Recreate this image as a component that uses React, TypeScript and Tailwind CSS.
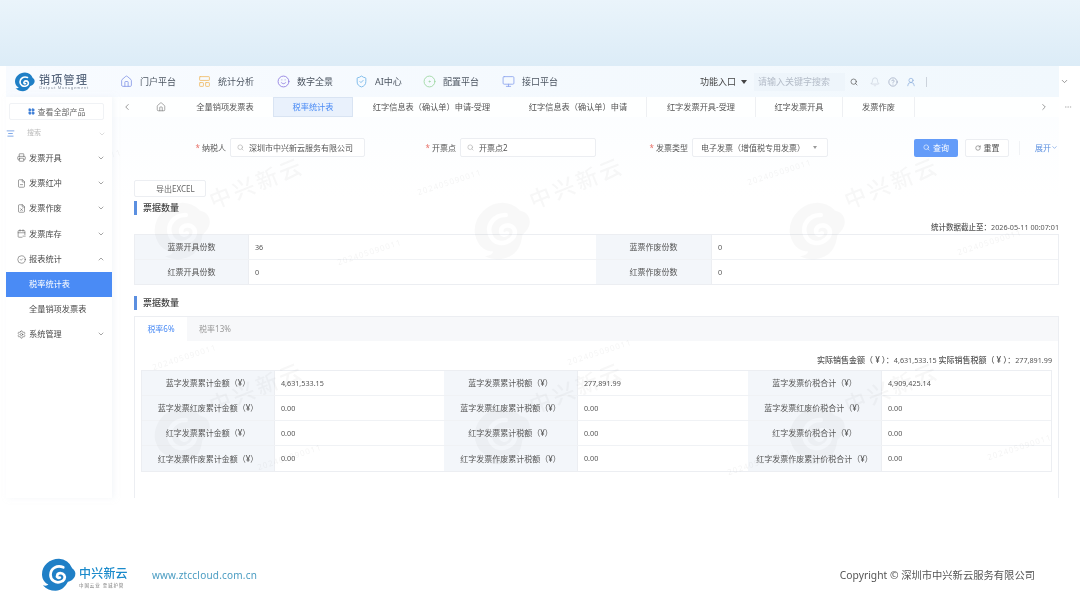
import {
  House, LayoutPanelTop, Smile, ShieldCheck, CircleDot, Monitor, ChevronDown, ChevronUp, ChevronLeft, ChevronRight,
  Search, Bell, CircleHelp, UserRound, LayoutGrid, Printer, FileMinus, FileX, CalendarMinus, CircleCheck, Settings, RotateCw, AlignCenter, Ellipsis,
} from "lucide-react";

const font = { fontFamily: '"Noto Sans","Noto Sans CJK SC","Liberation Sans",sans-serif' };

function Logo({ size, color = "#1f7fc6" }: { size: number; color?: string }) {
  return (
    <svg width={size} height={size} viewBox="0 0 40 40" fill="none">
      <path d="M20 1a17 17 0 0 1 15.500 11c3 2 4.500 5 3.500 8.500-1 4-5 6.500-8.500 7.500-3 6-8 10.500-14.500 10.500-6 0-11-2-15-6.500 3 1 5.500 0.500 6.500-1C2.500 29 0 24 0 19 0 9 9 1 20 1Z" fill={color} />
      <path d="M25 11c-7-3-15 1-15 9 0 6 6 10 12 8 4-1 6-5 4-8-2-3-7-3-8 0-1 2 1 4 3 3" stroke="#fff" strokeWidth="3.2" strokeLinecap="round" />
    </svg>
  );
}

function Stat({ label, value, labelW, valueW }: { label: string; value: string; labelW: string; valueW: string }) {
  return (
    <>
      <div className={`${labelW} h-full bg-[#f3f6fa] flex items-center justify-center border-r border-[#eceef2] shrink-0 text-[8px]`}>{label}</div>
      <div className={`${valueW} h-full flex items-center pl-[6px] shrink-0 text-[7.2px]`}>{value}</div>
    </>
  );
}

function Title() {
  return (
    <div className="h-[14px] flex items-center border-l-[3px] border-[#5b8fe0] pl-[6px] text-[9px] font-medium text-[#444]">票据数量</div>
  );
}

const sideTop = [
  { t: "发票开具", I: Printer },
  { t: "发票红冲", I: FileMinus },
  { t: "发票作废", I: FileX },
  { t: "发票库存", I: CalendarMinus },
];

const nav = [
  { t: "门户平台", I: House, c: "text-[#8a9be8]", w: "w-[78px]" },
  { t: "统计分析", I: LayoutPanelTop, c: "text-[#f0bd6a]", w: "w-[79px]" },
  { t: "数字全景", I: Smile, c: "text-[#8e7be0]", w: "w-[78px]" },
  { t: "AI中心", I: ShieldCheck, c: "text-[#72b5e8]", w: "w-[68px]" },
  { t: "配置平台", I: CircleDot, c: "text-[#9bd6a0]", w: "w-[79px]" },
  { t: "接口平台", I: Monitor, c: "text-[#8ea6ee]", w: "w-[79px]" },
];

const tabs = [
  { t: "红字信息表（确认单）申请-受理", w: "w-[157px]" },
  { t: "红字信息表（确认单）申请", w: "w-[137px] border-r border-[#eef0f3]" },
  { t: "红字发票开具-受理", w: "w-[108px]" },
  { t: "红字发票开具", w: "w-[88px] border-x border-[#eef0f3]" },
  { t: "发票作废", w: "w-[72px] border-r border-[#eef0f3]" },
];

const rows = [
  ["蓝字发票累计金额（¥）", "4,631,533.15", "蓝字发票累计税额（¥）", "277,891.99", "蓝字发票价税合计（¥）", "4,909,425.14"],
  ["蓝字发票红废累计金额（¥）", "0.00", "蓝字发票红废累计税额（¥）", "0.00", "蓝字发票红废价税合计（¥）", "0.00"],
  ["红字发票累计金额（¥）", "0.00", "红字发票累计税额（¥）", "0.00", "红字发票价税合计（¥）", "0.00"],
  ["红字发票作废累计金额（¥）", "0.00", "红字发票作废累计税额（¥）", "0.00", "红字发票作废累计价税合计（¥）", "0.00"],
];

const marks = [
  "left-[145px] top-[115px]",
  "left-[465px] top-[115px]",
  "left-[780px] top-[115px]",
  "left-[145px] top-[320px]",
  "left-[465px] top-[320px]",
  "left-[780px] top-[320px]",
];

const smallMarks = [
  "left-[10px] top-[320px]", "left-[5px] top-[405px]", "left-[145px] top-[285px]", "left-[410px] top-[110px]",
  "left-[50px] top-[90px]", "left-[740px] top-[100px]", "left-[250px] top-[385px]", "left-[560px] top-[280px]",
  "left-[720px] top-[390px]", "left-[950px] top-[170px]", "left-[980px] top-[375px]", "left-[330px] top-[180px]",
];

export default function App() {
  return (
    <div className="relative w-[1080px] h-[607px] overflow-hidden bg-white flex flex-col text-[8px] text-[#555] blur-[0.35px]" style={font}>
      <div className="h-[66px] shrink-0 bg-gradient-to-b from-[#eaf4fb] to-[#dcecf7]" />

      <div className="relative h-[432px] shrink-0 ml-[6px] w-[1053px] flex flex-col bg-white">
        {/* header */}
        <div className="h-[31px] shrink-0 flex items-center bg-gradient-to-r from-[#f8fbff] to-[#f1f8fd]">
          <div className="ml-[9px] shrink-0"><Logo size={20} /></div>
          <div className="ml-[4px] w-[81px] shrink-0 flex flex-col leading-none">
            <span className="text-[11px] font-medium tracking-[1.3px] text-[#5b6a80]">销项管理</span>
            <span className="text-[4px] text-[#8a94a3] tracking-[0.6px] mt-[1px]">Output Management</span>
          </div>
          {nav.map(({ t, I, c, w }) => (
            <div key={t} className={`${w} shrink-0 flex items-center gap-[7px] text-[9px] text-[#4d5662]`}>
              <I size={13} className={c} strokeWidth={1.6} />
              <span>{t}</span>
            </div>
          ))}
          <div className="ml-[119px] w-[54px] flex items-center text-[9px] text-[#444] shrink-0">
            功能入口
            <span className="ml-[5px] w-0 h-0 border-x-[3px] border-x-transparent border-t-[4px] border-t-[#444]" />
          </div>
          <div className="w-[91px] h-[18px] bg-[#eef5fb] flex items-center pl-[4px] text-[9px] text-[#b4bcc8] shrink-0">请输入关键字搜索</div>
          <Search size={8} className="ml-[5px] text-[#555] shrink-0" />
          <Bell size={10} className="ml-[12px] text-[#c3cbd8] shrink-0" strokeWidth={1.5} />
          <CircleHelp size={10} className="ml-[8px] text-[#8e9ab5] shrink-0" strokeWidth={1.5} />
          <UserRound size={10} className="ml-[8px] text-[#7fa5d8] shrink-0" strokeWidth={1.5} />
          <div className="ml-[10px] w-px h-[10px] bg-[#ccd3dc] shrink-0" />
          <ChevronDown size={9} className="ml-[133px] text-[#777] shrink-0" />
        </div>

        <div className="flex flex-1 min-h-0">
          {/* sidebar */}
          <aside className="w-[106px] shrink-0 flex flex-col bg-white shadow-[2px_0_5px_rgba(235,240,246,0.5)] z-10">
            <div className="mt-[6px] ml-[3px] w-[95px] h-[17px] border border-[#f0f2f5] rounded-[2px] flex items-center justify-center gap-[3px] text-[8px] text-[#666]">
              <LayoutGrid size={7} className="text-[#3f7fd8] fill-[#3f7fd8]" />
              查看全部产品
            </div>
            <div className="h-[25px] flex items-center text-[#bbb] pt-[2px]">
              <AlignCenter size={9} className="text-[#5b8fe0]" />
              <span className="ml-[12px] text-[7px]">搜索</span>
              <ChevronDown size={8} className="ml-auto mr-[6px] text-[#ccc]" />
            </div>
            {sideTop.map(({ t, I }) => (
              <div key={t} className="h-[25.4px] flex items-center pl-[11px] pr-[7px] text-[#4a4a4a]">
                <I size={9} strokeWidth={1.4} />
                <span className="ml-[3px] text-[8.2px]">{t}</span>
                <ChevronDown size={8} className="ml-auto text-[#777]" />
              </div>
            ))}
            <div className="h-[25.4px] flex items-center pl-[11px] pr-[7px] text-[#4a4a4a]">
              <CircleCheck size={9} strokeWidth={1.4} />
              <span className="ml-[3px] text-[8.2px]">报表统计</span>
              <ChevronUp size={8} className="ml-auto text-[#777]" />
            </div>
            <div className="h-[25px] bg-[#4a8bf5] text-white flex items-center pl-[23px] text-[8.2px]">税率统计表</div>
            <div className="h-[25px] flex items-center pl-[23px] text-[8.2px] text-[#4a4a4a]">全量销项发票表</div>
            <div className="h-[25px] flex items-center pl-[11px] pr-[7px] text-[#4a4a4a]">
              <Settings size={9} strokeWidth={1.4} />
              <span className="ml-[3px] text-[8.2px]">系统管理</span>
              <ChevronDown size={8} className="ml-auto text-[#777]" />
            </div>
          </aside>

          <div className="flex-1 min-w-0 flex flex-col bg-gradient-to-b from-[#fbfdff] to-white to-[25%]">
            {/* tabs */}
            <div className="h-[20px] shrink-0 flex items-stretch text-[8.2px] text-[#555] bg-white/70">
              <div className="w-[32px] flex items-center pl-[10px]"><ChevronLeft size={10} className="text-[#888]" /></div>
              <div className="w-[33px] flex items-center justify-center"><House size={10} className="text-[#777]" strokeWidth={1.5} /></div>
              <div className="w-[96px] flex items-center justify-center">全量销项发票表</div>
              <div className="w-[80px] bg-[#e9f1fc] border border-[#d9e4f3] flex items-center justify-center text-[#4a8bf5]">税率统计表</div>
              {tabs.map((t) => (
                <div key={t.t} className={`${t.w} flex items-center justify-center`}>{t.t}</div>
              ))}
              <div className="ml-[124px] flex items-center"><ChevronRight size={10} className="text-[#888]" /></div>
            </div>

            {/* body */}
            <div className="pl-[22px] flex flex-col flex-1 min-h-0">
              {/* filters */}
              <div className="mt-[21px] h-[19px] flex items-center shrink-0">
                <div className="w-[92px] text-right"><span className="text-[#e8736b]">* </span>纳税人</div>
                <div className="ml-[4px] w-[135px] h-full bg-white border border-[#eceef2] rounded-[2px] flex items-center pl-[6px] gap-[5px]">
                  <Search size={7} className="text-[#aaa]" />深圳市中兴新云服务有限公司
                </div>
                <div className="w-[91px] text-right"><span className="text-[#e8736b]">* </span>开票点</div>
                <div className="ml-[4px] w-[136px] h-full bg-white border border-[#eceef2] rounded-[2px] flex items-center pl-[6px] gap-[5px]">
                  <Search size={7} className="text-[#aaa]" />开票点2
                </div>
                <div className="w-[92px] text-right"><span className="text-[#e8736b]">* </span>发票类型</div>
                <div className="ml-[4px] w-[136px] h-full bg-white border border-[#eceef2] rounded-[2px] flex items-center pl-[8px] pr-[10px]">
                  电子发票（增值税专用发票）
                  <span className="ml-auto w-0 h-0 border-x-[2.5px] border-x-transparent border-t-[3px] border-t-[#999]" />
                </div>
                <div className="ml-[86px] w-[44px] h-[18px] bg-[#649cf9] rounded-[2px] text-white flex items-center justify-center gap-[3px]">
                  <Search size={7} />查询
                </div>
                <div className="ml-[7px] w-[44px] h-[18px] bg-white border border-[#eceef2] rounded-[2px] flex items-center justify-center gap-[3px]">
                  <RotateCw size={6} />重置
                </div>
                <div className="ml-[10px] w-px h-[14px] bg-[#f0f2f5]" />
                <div className="ml-[15px] flex items-center text-[#5b8fe0]">展开<ChevronDown size={7} /></div>
              </div>

              <div className="mt-[23px] w-[72px] h-[17px] bg-white border border-[#eceef2] rounded-[2px] flex items-center pl-[21px] shrink-0 text-[#666]">导出EXCEL</div>
              <div className="mt-[4px] shrink-0"><Title /></div>
              <div className="mt-[7px] h-[10px] leading-[10px] text-right text-[7.2px] text-[#555] shrink-0">
                <span className="font-medium text-[7.5px]">统计数据截止至：</span>2026-05-11 00:07:01
              </div>

              <div className="mt-[2px] border border-[#eceef2] shrink-0 flex flex-col">
                <div className="h-[25px] flex items-center border-b border-[#f0f2f5]">
                  <Stat label="蓝票开具份数" value="36" labelW="w-[114px]" valueW="w-[347px]" />
                  <Stat label="蓝票作废份数" value="0" labelW="w-[116px]" valueW="w-[346px]" />
                </div>
                <div className="h-[24px] flex items-center">
                  <Stat label="红票开具份数" value="0" labelW="w-[114px]" valueW="w-[347px]" />
                  <Stat label="红票作废份数" value="0" labelW="w-[116px]" valueW="w-[346px]" />
                </div>
              </div>

              <div className="mt-[11px] shrink-0"><Title /></div>

              <div className="mt-[6px] flex-1 min-h-0 border-x border-[#eceef2] flex flex-col">
                <div className="h-[25px] bg-[#f7f8fa] flex items-stretch border-t border-[#eceef2] shrink-0">
                  <div className="w-[52px] bg-white flex items-center justify-center text-[#4a8bf5]">税率6%</div>
                  <div className="w-[56px] flex items-center justify-center text-[#999]">税率13%</div>
                </div>
                <div className="mt-[14px] mr-[6px] h-[10px] leading-[10px] text-right text-[7.2px] shrink-0">
                  <span className="font-medium text-[8px]">实际销售金额（ ¥ ）：</span>4,631,533.15 <span className="font-medium text-[8px]">实际销售税额（ ¥ ）：</span>277,891.99
                </div>
                <div className="mt-[5px] mx-[6px] border border-[#eceef2] flex flex-col shrink-0">
                  {rows.map((r, i) => (
                    <div key={i} className={`h-[25px] flex items-center ${i < 3 ? "border-b border-[#f0f2f5]" : ""}`}>
                      <Stat label={r[0]} value={r[1]} labelW="w-[133px]" valueW="w-[169px]" />
                      <Stat label={r[2]} value={r[3]} labelW="w-[134px]" valueW="w-[170px]" />
                      <Stat label={r[4]} value={r[5]} labelW="w-[134px]" valueW="w-[169px]" />
                    </div>
                  ))}
                </div>
              </div>
            </div>
          </div>
        </div>

        {/* watermark overlay */}
        <div className="absolute inset-0 pointer-events-none overflow-hidden">
          {marks.map((m) => (
            <div key={m} className={`absolute ${m} flex items-center opacity-[0.035] -rotate-[22deg]`}>
              <Logo size={58} color="#555" />
              <span className="ml-[6px] -mt-[34px] text-[22px] font-medium tracking-[3px] text-[#333]">中兴新云</span>
            </div>
          ))}
          {smallMarks.map((m) => (
            <div key={m} className={`absolute ${m} text-[8px] text-[#333] opacity-[0.05] -rotate-[18deg] tracking-[1px]`}>202405090011</div>
          ))}
        </div>
      </div>
      <Ellipsis size={8} className="absolute left-[1064px] top-[103px] text-[#bbb]" />

      {/* footer */}
      <footer className="flex-1 flex items-start pt-[60px] pl-[42px] pr-[45px] bg-white">
        <Logo size={34} />
        <div className="ml-[3px] mt-[8px] w-[62px] flex flex-col">
          <span className="text-[12px] leading-[15px] font-medium text-[#1a8acb] tracking-[0.2px]">中兴新云</span>
          <span className="text-[4.5px] leading-[6px] text-[#777] tracking-[0.9px] mt-[1px] whitespace-nowrap">中国云业 至诚护管</span>
        </div>
        <span className="mt-[10px] ml-[11px] text-[10px] text-[#4a9cc2] tracking-[0.2px]" style={{ fontFamily: '"Noto Sans","Liberation Sans",sans-serif' }}>www.ztccloud.com.cn</span>
        <span className="mt-[10px] ml-auto text-[10.3px] text-[#555]">Copyright © 深圳市中兴新云服务有限公司</span>
      </footer>
    </div>
  );
}
